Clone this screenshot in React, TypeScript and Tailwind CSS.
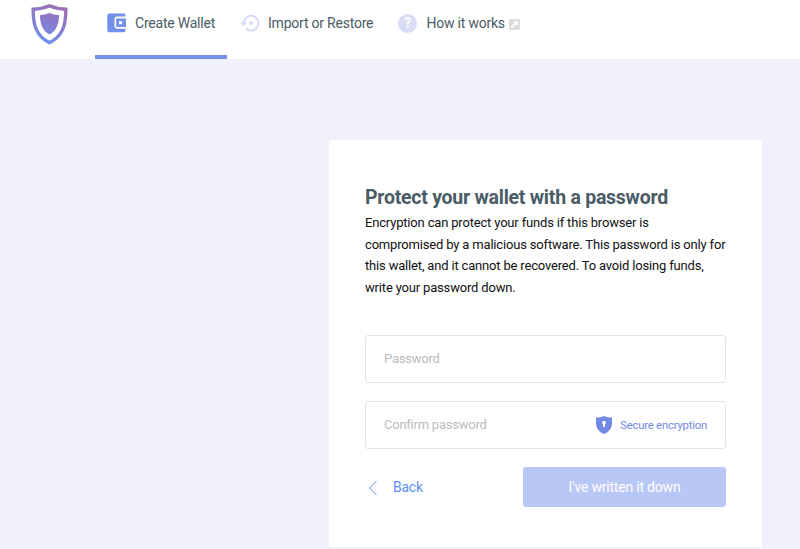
import { useState } from 'react'

interface NavItem {
  id: string
  label: string
  icon: React.ReactNode
  className: string
  external?: boolean
}

const WalletIcon = () => (
  <svg className="w-5 h-5" viewBox="0 0 20 20" fill="none">
    <path d="M2 .6H17A1.800 1.800 0 0 1 18.500 2.400V3.600H10.500A2.800 2.800 0 0 0 7.500 6.500V12.500A2.800 2.800 0 0 0 10.500 15.700H18.500V17.400A1.800 1.800 0 0 1 17 19.200H2A1.800 1.800 0 0 1 .3 17.400V2.400A1.800 1.800 0 0 1 2 .6Z" fill="#7390ea" />
    <path fillRule="evenodd" d="M9.200 5.500H19V14H9.200ZM12 8.300V11.200H15V8.300Z" fill="#7390ea" />
  </svg>
)

const RestoreIcon = () => (
  <svg className="w-5 h-5" viewBox="0 0 20 20" fill="none">
    <path d="M3.700 10.500A7.400 7.400 0 1 1 6 15.600" stroke="#d8dcf5" strokeWidth="2" />
    <path d="M0 9.500H7.200L3.600 13.300Z" fill="#d8dcf5" />
    <circle cx="11" cy="10" r="1.900" fill="#d8dcf5" />
  </svg>
)

const HelpIcon = () => (
  <span className="flex items-center justify-center w-[19px] h-[19px] -ml-px mr-px rounded-full bg-[#d8dcf5] text-white text-[14px] leading-none font-bold">
    ?
  </span>
)

const NAV_ITEMS: NavItem[] = [
  {
    id: 'create',
    label: 'Create Wallet',
    icon: <WalletIcon />,
    className: 'w-[132px] pl-3 gap-2',
  },
  {
    id: 'import',
    label: 'Import or Restore',
    icon: <RestoreIcon />,
    className: 'w-[159px] pl-[13px] gap-2',
  },
  {
    id: 'how',
    label: 'How it works',
    icon: <HelpIcon />,
    className: 'pl-[13px] gap-[8.500px]',
    external: true,
  },
]

export default function App() {
  const [active, setActive] = useState('create')
  const [password, setPassword] = useState('')
  const [confirm, setConfirm] = useState('')

  return (
    <div className="h-[549px] overflow-hidden bg-[#f1f1fb] font-[Roboto,sans-serif] text-[#4a5c66]">
      {/* Header */}
      <header className="flex h-[59px] bg-white">
        <div className="w-[95px] shrink-0 pl-[31px] pt-1">
          <svg className="w-[37px] h-[41px]" viewBox="0 0 37 41" fill="none">
            <defs>
              <linearGradient id="shield" x1="30" y1="0" x2="14" y2="41" gradientUnits="userSpaceOnUse">
                <stop stopColor="#a16aae" />
                <stop offset="1" stopColor="#6b91f0" />
              </linearGradient>
            </defs>
            <path
              d="M18.500 1.800C13 4.200 7.500 5 2.200 5.200C2 20 5 32.500 18.500 38.600C32 32.500 35 20 34.800 5.200C29.500 5 24 4.200 18.500 1.800Z"
              stroke="url(#shield)"
              strokeWidth="3.400"
            />
            <path
              d="M18.500 9C15.500 10.300 12.500 10.900 9 11C9 20 11.500 26.800 18.500 30.500C25.500 26.800 28 20 28 11C24.500 10.900 21.500 10.300 18.500 9Z"
              fill="url(#shield)"
            />
          </svg>
        </div>

        <nav className="flex">
          {NAV_ITEMS.map((item) => (
            <button
              key={item.id}
              onClick={() => setActive(item.id)}
              className={`flex items-center h-[59px] pb-[9px] border-b-4 text-[14px] tracking-[-0.220px] whitespace-nowrap
                ${item.className}
                ${active === item.id ? 'border-[#7390ea]' : 'border-transparent'}`}
            >
              {item.icon}
              <span>{item.label}</span>
              {item.external && (
                <svg className="w-[11px] h-[11px] -ml-[4.500px] mt-0.5" viewBox="0 0 11 11" fill="none">
                  <rect width="11" height="11" rx="1.500" fill="#dcdcdc" />
                  <path d="M2.300 8.700L6.500 4.500" stroke="#fff" strokeWidth="1.800" />
                  <path d="M4 2.200H8.800V7Z" fill="#fff" />
                </svg>
              )}
            </button>
          ))}
        </nav>
      </header>

      {/* Password Card */}
      <main className="mt-[81px] ml-[329px] w-[433px] h-[407px] bg-white px-9 pt-[46px]">
        <h1 className="text-[19.500px] leading-6 font-bold tracking-[-0.250px]">Protect your wallet with a password</h1>
        <p className="mt-[2px] text-[13px] tracking-[-0.175px] leading-[21.600px] text-[#111] whitespace-nowrap">
          Encryption can protect your funds if this browser is<br />
          compromised by a malicious software. This password is only for<br />
          this wallet, and it cannot be recovered. To avoid losing funds,<br />
          write your password down.
        </p>

        <form onSubmit={(e) => e.preventDefault()} className="mt-[37px]">
          <input
            type="password"
            value={password}
            onChange={(e) => setPassword(e.target.value)}
            placeholder="Password"
            className="block w-full h-12 px-[18px] pb-px border border-[#e4e4e6] rounded-[3px] text-[13px] tracking-[-0.220px]
              placeholder:text-[#bcbcbc] focus:outline-none"
          />

          <div className="flex items-center mt-[18px] h-12 px-[18px] border border-[#e4e4e6] rounded-[3px]">
            <input
              type="password"
              value={confirm}
              onChange={(e) => setConfirm(e.target.value)}
              placeholder="Confirm password"
              className="flex-1 min-w-0 pb-0.5 text-[13px] tracking-[-0.240px] placeholder:text-[#bcbcbc] focus:outline-none"
            />
            <svg className="w-4 h-[18px] mr-2" viewBox="0 0 16 18">
              <path d="M8 0C5.500 1 3 1.500 0 1.600V7C0 12.500 3 16 8 18C13 16 16 12.500 16 7V1.600C13 1.500 10.500 1 8 0Z" fill="#7389e6" />
              <circle cx="8" cy="6.600" r="1.900" fill="#fff" />
              <path d="M7.100 7H8.900V11H7.100Z" fill="#fff" />
            </svg>
            <span className="pt-0.5 text-[11.300px] tracking-[-0.200px] text-[#7389e6]">Secure encryption</span>
          </div>

          <div className="flex items-center justify-between mt-[18px]">
            <button type="button" className="flex items-center gap-[15px] pl-[3px] pt-px text-[14px] tracking-[-0.250px] text-[#5b8df5]">
              <svg className="w-[10px] h-4" viewBox="0 0 10 16" fill="none" stroke="#5b8df5">
                <path d="M8.500 1L1.500 8L8.500 15" />
              </svg>
              Back
            </button>
            <button type="submit" className="w-[203px] h-10 rounded-[3px] bg-[#b9c7f6] text-white text-[14px] tracking-[-0.200px]">
              I've written it down
            </button>
          </div>
        </form>
      </main>
    </div>
  )
}
